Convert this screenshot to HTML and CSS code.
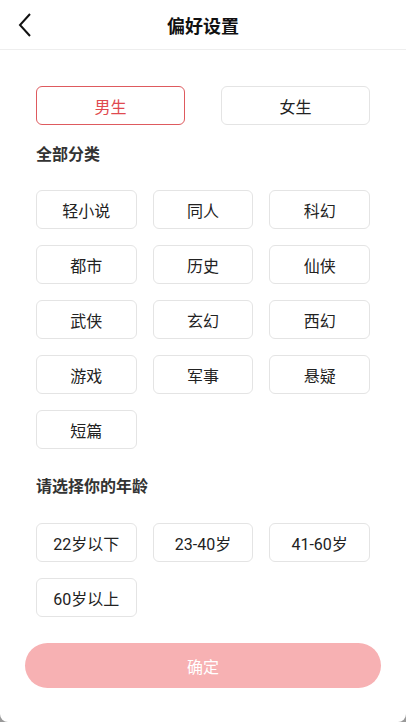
FILE: index.html
```html
<html>
<head>
<meta charset="utf-8">
<title>偏好设置</title>
<link rel="stylesheet" href="styles.css">
</head>
<body>
<div class="page">
<div class="header">
<a class="back" href="#"><svg width="14" height="24" viewBox="0 0 14 24"><path d="M12 1 L2 12 L12 23" fill="none" stroke="#111" stroke-width="2"/></svg></a>
<h1>偏好设置</h1>
</div>

<div class="content">
<div class="gender">
<div class="btn active">男生</div>
<div class="btn">女生</div>
</div>

<h2>全部分类</h2>
<div class="tags">
<div class="btn">轻小说</div>
<div class="btn">同人</div>
<div class="btn">科幻</div>
<div class="btn">都市</div>
<div class="btn">历史</div>
<div class="btn">仙侠</div>
<div class="btn">武侠</div>
<div class="btn">玄幻</div>
<div class="btn">西幻</div>
<div class="btn">游戏</div>
<div class="btn">军事</div>
<div class="btn">悬疑</div>
<div class="btn">短篇</div>
</div>

<h2 class="age-title">请选择你的年龄</h2>
<div class="tags">
<div class="btn">22岁以下</div>
<div class="btn">23-40岁</div>
<div class="btn">41-60岁</div>
<div class="btn">60岁以上</div>
</div>
</div>

<div class="confirm">确定</div>
</div>
</body>
</html>
```

FILE: styles.css
```css
html {background-color:#999; height:100%}
body {margin:0; height:100%; font-family:Roboto, "Noto Sans CJK SC", sans-serif; color:#222}
.page {background-color:#fff; height:100%; border-radius:0 0 8px 8px; overflow:hidden}
.header {position:relative; height:49px; border-bottom:1px solid #eee; display:flex; align-items:center; justify-content:center}
.header h1 {margin:0; font-size:18px; font-weight:bold; color:#111}
.back {position:absolute; left:18px; top:13px; display:block; height:24px}
.content {padding:0 36px}
.gender {display:grid; grid-template-columns:1fr 1fr; gap:36px; margin-top:36px}
.btn {height:37px; border:1px solid #e4e4e4; border-radius:6px; display:flex; align-items:center; justify-content:center; font-size:16px; color:#222}
.btn.active {border-color:#de5a5e; color:#e04a50}
h2 {margin:19px 0 24px 0; font-size:16px; line-height:22px; font-weight:bold; color:#333}
.age-title {margin-top:27px; margin-bottom:25px}
.tags {display:grid; grid-template-columns:1fr 1fr 1fr; gap:16px}
.confirm {margin:26px 25px 0 25px; height:45px; border-radius:23px; background-color:#f7b1b3; color:#fff; font-size:16px; display:flex; align-items:center; justify-content:center}
```
